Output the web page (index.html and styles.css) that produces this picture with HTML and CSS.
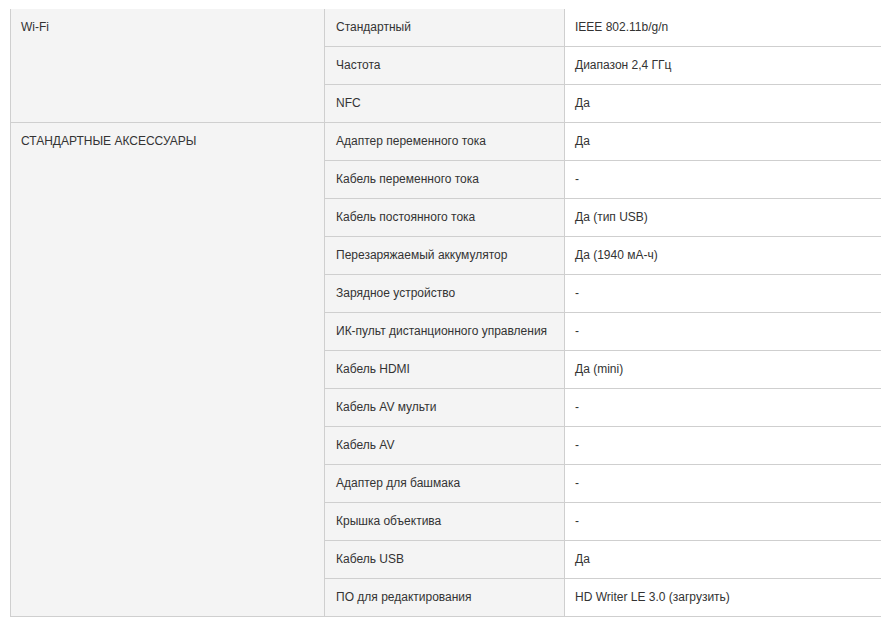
FILE: index.html
```html
<!DOCTYPE html>
<html lang="ru">
<head>
<meta charset="utf-8">
<title>Характеристики</title>
<link rel="stylesheet" href="styles.css">
</head>
<body>
<table class="specs">
  <colgroup>
    <col class="c-group">
    <col class="c-name">
    <col class="c-value">
  </colgroup>
  <tbody>
    <tr>
      <td class="group" rowspan="3">Wi-Fi</td>
      <td class="name">Стандартный</td>
      <td class="value">IEEE 802.11b/g/n</td>
    </tr>
    <tr><td class="name">Частота</td><td class="value">Диапазон 2,4 ГГц</td></tr>
    <tr><td class="name">NFC</td><td class="value">Да</td></tr>
    <tr>
      <td class="group" rowspan="13">СТАНДАРТНЫЕ АКСЕССУАРЫ</td>
      <td class="name">Адаптер переменного тока</td>
      <td class="value">Да</td>
    </tr>
    <tr><td class="name">Кабель переменного тока</td><td class="value">-</td></tr>
    <tr><td class="name">Кабель постоянного тока</td><td class="value">Да (тип USB)</td></tr>
    <tr><td class="name">Перезаряжаемый аккумулятор</td><td class="value">Да (1940 мА-ч)</td></tr>
    <tr><td class="name">Зарядное устройство</td><td class="value">-</td></tr>
    <tr><td class="name">ИК-пульт дистанционного управления</td><td class="value">-</td></tr>
    <tr><td class="name">Кабель HDMI</td><td class="value">Да (mini)</td></tr>
    <tr><td class="name">Кабель AV мульти</td><td class="value">-</td></tr>
    <tr><td class="name">Кабель AV</td><td class="value">-</td></tr>
    <tr><td class="name">Адаптер для башмака</td><td class="value">-</td></tr>
    <tr><td class="name">Крышка объектива</td><td class="value">-</td></tr>
    <tr><td class="name">Кабель USB</td><td class="value">Да</td></tr>
    <tr><td class="name">ПО для редактирования</td><td class="value">HD Writer LE 3.0 (загрузить)</td></tr>
  </tbody>
</table>
</body>
</html>
```
FILE: styles.css
```css
html, body {
  background: #ffffff;
}
body {
  margin: 9px 0 0 10px;
  font-family: "Liberation Sans", Arial, sans-serif;
  font-size: 12px;
  color: #333333;
}
.specs {
  width: 871px;
  table-layout: fixed;
  border-collapse: separate;
  border-spacing: 0;
}
.c-group { width: 315px; }
.c-name { width: 240px; }
.c-value { width: 316px; }
.specs td {
  padding: 9px 10px 10px 10px;
  line-height: 18px;
  vertical-align: top;
  border-bottom: 1px solid #cfcfcf;
  text-align: left;
}
.specs .group {
  background: #f4f4f4;
  border-left: 1px solid #cfcfcf;
  border-right: 1px solid #cfcfcf;
}
.specs .name {
  background: #f4f4f4;
  border-right: 1px solid #cfcfcf;
  padding-left: 11px;
}
.specs .value {
  background: #ffffff;
}
```
